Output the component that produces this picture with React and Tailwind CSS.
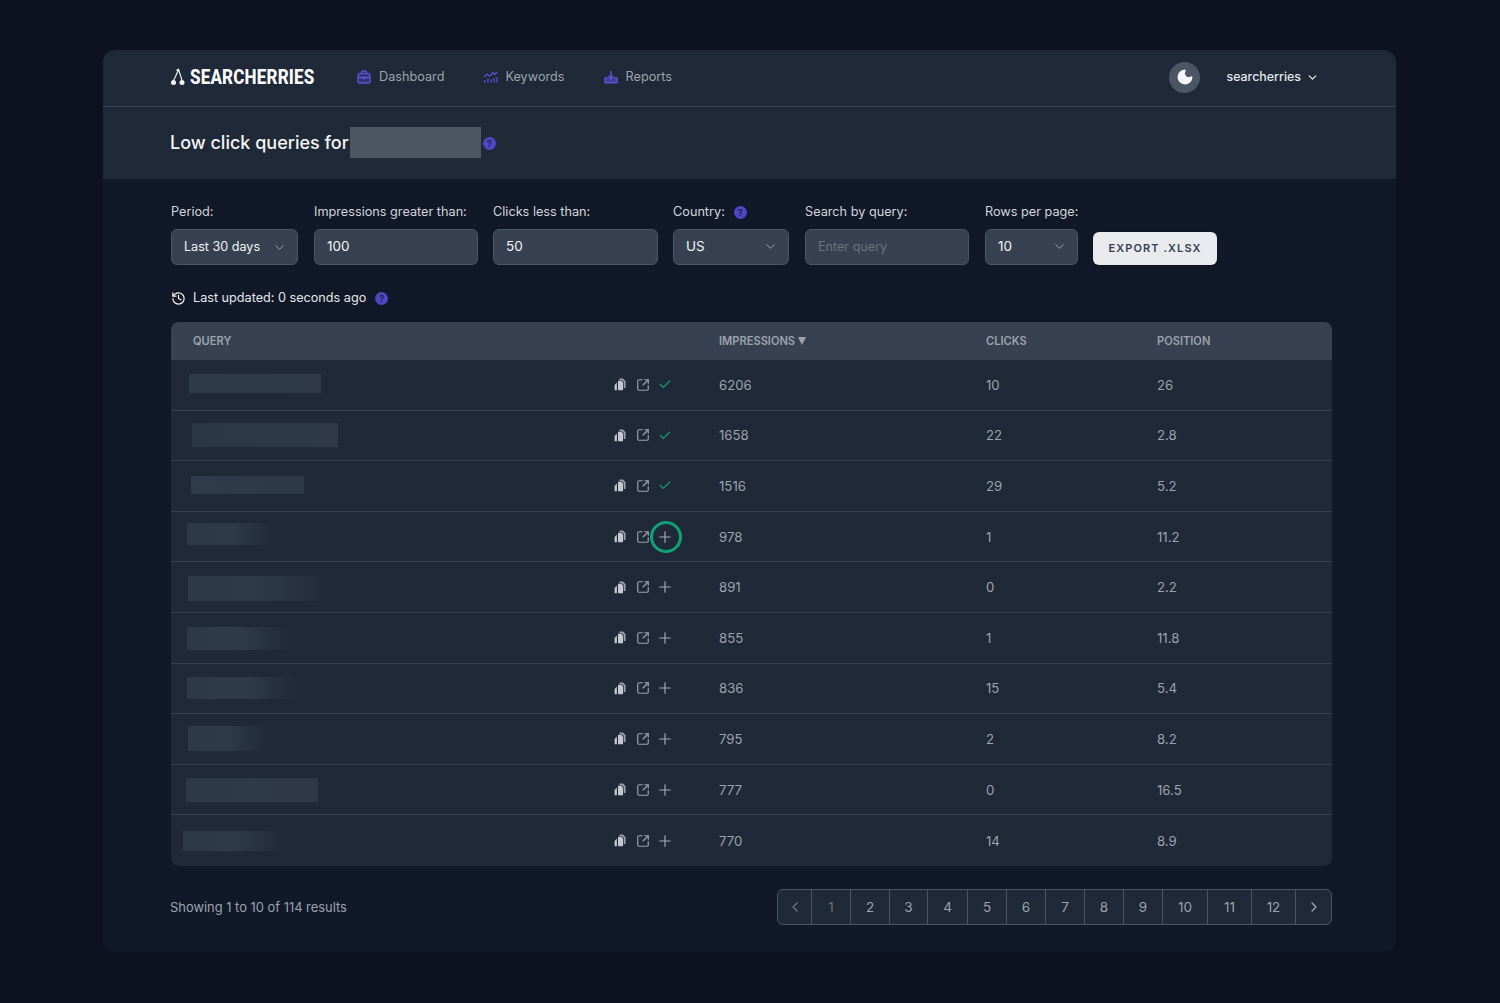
import React from "react";
import { ChevronDown, ChevronLeft, ChevronRight, Check, Plus, SquareArrowOutUpRight, History, Moon } from "lucide-react";

const rows = [
  { imp: "6206", clicks: "10", pos: "26", done: true, ml: 18, w: 132, h: 19, mt: -2, fade: "bg-gradient-to-r from-[#2d3a49] via-[#2e3b4a] to-[#2f3947]" },
  { imp: "1658", clicks: "22", pos: "2.8", done: true, ml: 21, w: 146, h: 24, mt: 0, fade: "bg-gradient-to-r from-[#2a3645] via-[#2d3947] to-[#2f3947]" },
  { imp: "1516", clicks: "29", pos: "5.2", done: true, ml: 20, w: 113, h: 18, mt: -1, fade: "bg-gradient-to-r from-[#2f3c4b] via-[#2e3a49] to-[#2e3946]" },
  { imp: "978", clicks: "1", pos: "11.2", ml: 16, w: 90, h: 22, mt: -6, ring: true, fade: "bg-gradient-to-r from-[#2d3947] via-[#2f3a48] to-[#1f2937]" },
  { imp: "891", clicks: "0", pos: "2.2", ml: 17, w: 132, h: 25, mt: 2, fade: "bg-gradient-to-r from-[#2d3947] via-[#2f3a48] to-[#232d3b]" },
  { imp: "855", clicks: "1", pos: "11.8", ml: 16, w: 106, h: 23, mt: 1, fade: "bg-gradient-to-r from-[#2d3947] via-[#303b49] to-[#1f2937]" },
  { imp: "836", clicks: "15", pos: "5.4", ml: 16, w: 114, h: 22, mt: 0, fade: "bg-gradient-to-r from-[#2d3947] via-[#303b49] to-[#1f2937]" },
  { imp: "795", clicks: "2", pos: "8.2", ml: 17, w: 82, h: 25, mt: 0, fade: "bg-gradient-to-r from-[#2d3947] via-[#2f3a48] to-[#1f2937]" },
  { imp: "777", clicks: "0", pos: "16.5", ml: 15, w: 132, h: 24, mt: 1, fade: "bg-gradient-to-r from-[#2d3947] via-[#2f3a48] to-[#2e3846]" },
  { imp: "770", clicks: "14", pos: "8.9", ml: 12, w: 104, h: 20, mt: 0, fade: "bg-gradient-to-r from-[#2d3947] via-[#2f3a48] to-[#1f2937]" },
];

const pages = [
  { t: "1", w: "w-[39px]", dim: true }, { t: "2", w: "w-[39px]" }, { t: "3", w: "w-[38px]" }, { t: "4", w: "w-[40px]" },
  { t: "5", w: "w-[39px]" }, { t: "6", w: "w-[39px]" }, { t: "7", w: "w-[39px]" }, { t: "8", w: "w-[39px]" },
  { t: "9", w: "w-[39px]" }, { t: "10", w: "w-[45px]" }, { t: "11", w: "w-[44px]" }, { t: "12", w: "w-[44px]" },
];

function Help({ className = "" }) {
  return (
    <span className={"inline-flex h-[13px] w-[13px] items-center justify-center rounded-full bg-[#4f46c8] text-[9px] font-bold leading-none text-[#1f2937] " + className}>?</span>
  );
}

function CopyIcon() {
  return (
    <svg width="12" height="13" viewBox="0 0 12 13" aria-hidden="true">
      <path d="M5.5 0.5h3.4L11.5 3v7h-1.8V3.8L7.9 2.2H5.5z" fill="#9ca3af" />
      <path d="M4 2.8h3.4L9 4.4v7.8H4z" fill="#c4c8cf" />
      <path d="M0.6 7L2.9 4.6v7.6H0.6z" fill="#c4c8cf" />
    </svg>
  );
}

function Logo() {
  return (
    <svg width="16" height="18" viewBox="0 0 16 18" fill="none" aria-hidden="true">
      <path d="M8.5 1C7.5 5 5.5 8.5 3.5 12.5M8.5 1C9.5 5 11 8.5 12 12.5M8.5 1L6.5 2.5" stroke="#f3f4f6" strokeWidth="1.1" />
      <circle cx="3.5" cy="14.5" r="2.5" fill="#f3f4f6" />
      <circle cx="12" cy="14.5" r="2.5" fill="#f3f4f6" />
    </svg>
  );
}

function DashIcon() {
  return (
    <svg width="14" height="14" viewBox="0 0 14 14" fill="none" stroke="#5b50d6" strokeWidth="1.5" aria-hidden="true">
      <path d="M4.5 3.5V2.2C4.5 1.5 5 1 5.7 1h2.6c.7 0 1.2.5 1.2 1.2v1.3" />
      <rect x="1" y="3.5" width="12" height="9.5" rx="2" fill="#5b50d6" fillOpacity="0.3" />
      <path d="M1 7.6h12M6 7.6v1h2v-1" />
    </svg>
  );
}

function KeyIcon() {
  return (
    <svg width="15" height="13" viewBox="0 0 15 13" fill="none" stroke="#5b50d6" strokeWidth="1.3" aria-hidden="true">
      <path d="M1 7l3.2-3 2.6 2.2L10 2.5l1.6 2L14 2" />
      <path d="M1.8 12.5V10M5 12.5V8.5M8 12.5V9.5M11 12.5V8M14 12.5V7" />
    </svg>
  );
}

function ReportIcon() {
  return (
    <svg width="14" height="14" viewBox="0 0 14 14" fill="none" stroke="#5b50d6" strokeWidth="1.6" aria-hidden="true">
      <path d="M7 1v7.5M4.2 6L7 8.8 9.8 6" />
      <path d="M3.8 8H1.2v4.8h11.6V8h-2.6" fill="#5b50d6" fillOpacity="0.6" />
    </svg>
  );
}

function NavItem({ icon, label, gap }) {
  return (
    <a className={"flex items-center text-[12.7px] text-[#9ca3af] " + gap}>
      {icon}
      <span>{label}</span>
    </a>
  );
}

function Field({ label, help, children, className }) {
  return (
    <div className={"flex flex-col " + className}>
      <label className="mb-[8px] flex h-[18px] items-center gap-[9px] whitespace-nowrap text-[12.7px] leading-[18px] text-[#d1d5db]">
        {label}
        {help && <Help />}
      </label>
      {children}
    </div>
  );
}

const boxCls = "flex h-[36px] w-full items-center justify-between rounded-md border border-[#4b5563] bg-[#374151] pl-[12px] pr-[10px]";

function Select({ value, size = "text-[13.5px] pb-px" }) {
  return (
    <div className={boxCls + " text-[#f3f4f6] " + size}>
      <span>{value}</span>
      <ChevronDown size={15} strokeWidth={1.6} className="text-[#9ca3af]" />
    </div>
  );
}

const cols = "grid grid-cols-[526px_267px_171px_1fr]";

export default function App() {
  return (
    <div className="min-h-[1003px] bg-[#0c1220] px-[103px] pt-[50px] [font-family:Inter,'Liberation_Sans',sans-serif]">
      <div className="h-[902px] w-[1293px] overflow-hidden rounded-xl bg-[#111827]">
        <header className="bg-[#1f2937]">
          <nav className="flex h-[57px] items-center border-b border-[#374151] pb-[2px] pl-[67px] pr-[77px]">
            <div className="flex w-[187px] items-center gap-[4px]">
              <Logo />
              <span className="inline-block origin-left scale-x-[0.81] whitespace-nowrap text-[21px] font-extrabold leading-none tracking-[0.01em] text-[#f9fafb] [font-family:Roboto,sans-serif]">SEARCHERRIES</span>
            </div>
            <div className="flex items-center gap-[39px]">
              <NavItem icon={<DashIcon />} label="Dashboard" gap="gap-[8px]" />
              <NavItem icon={<KeyIcon />} label="Keywords" gap="gap-[7px]" />
              <NavItem icon={<ReportIcon />} label="Reports" gap="gap-[8px]" />
            </div>
            <div className="ml-auto flex items-center">
              <span className="flex h-[31px] w-[31px] items-center justify-center rounded-full bg-[#4b5563]">
                <Moon size={18} fill="#f3f4f6" stroke="#f3f4f6" />
              </span>
              <span className="ml-[26px] text-[12.4px] font-medium text-[#e5e7eb]">searcherries</span>
              <ChevronDown size={13} strokeWidth={2.4} className="ml-[5px] text-[#e5e7eb]" />
            </div>
          </nav>
          <div className="flex h-[72px] items-center pb-[2px] pl-[67px]">
            <h1 className="text-[18px] font-medium text-[#f3f4f6]">Low click queries for</h1>
            <span className="ml-[1px] h-[31px] w-[131px] bg-[#4e5663]" />
            <Help className="ml-[2px] mt-[3px]" />
          </div>
        </header>

        <main className="pl-[68px] pr-[64px] pt-[24px]">
          <div className="flex items-end">
            <Field label="Period:" className="w-[127px]"><Select value="Last 30 days" size="text-[12.6px]" /></Field>
            <Field label="Impressions greater than:" className="ml-[16px] w-[164px]"><div className={boxCls + " pb-px text-[13.5px] text-[#f3f4f6]"}>100</div></Field>
            <Field label="Clicks less than:" className="ml-[15px] w-[165px]"><div className={boxCls + " pb-px text-[13.5px] text-[#f3f4f6]"}>50</div></Field>
            <Field label="Country:" help className="ml-[15px] w-[116px]"><Select value="US" /></Field>
            <Field label="Search by query:" className="ml-[16px] w-[164px]"><div className={boxCls + " text-[12.6px] text-[#6b7280]"}>Enter query</div></Field>
            <Field label="Rows per page:" className="ml-[16px] w-[93px]"><Select value="10" /></Field>
            <button className="ml-[15px] h-[33px] w-[124px] rounded-md bg-[#e8eaed] text-[11px] font-semibold tracking-[0.1em] text-[#374151] shadow">EXPORT .XLSX</button>
          </div>

          <div className="mt-[23px] flex h-[20px] items-center text-[12.65px] text-[#e5e7eb]">
            <History size={15} strokeWidth={2} className="mr-[7px] text-[#f3f4f6]" />
            <span>Last updated: 0 seconds ago</span>
            <Help className="ml-[9px]" />
          </div>

          <div className="mt-[14px] overflow-hidden rounded-lg bg-[#1f2937]">
            <div className={cols + " h-[38px] items-center bg-[#374151] text-[11.1px] font-semibold text-[#9ca3af]"}>
              <div className="pl-[22px]">QUERY</div>
              <div className="flex items-center gap-[3px] pl-[22px]">IMPRESSIONS<span className="h-0 w-0 border-x-[4.5px] border-t-[8px] border-x-transparent border-t-[#9ca3af]" /></div>
              <div className="pl-[22px]">CLICKS</div>
              <div className="pl-[22px]">POSITION</div>
            </div>
            {rows.map((r, i) => (
              <div key={r.imp} className={cols + " h-[50.6px] items-center text-[13.2px] text-[#9ca3af] " + (i < rows.length - 1 ? "border-b border-[#374151]" : "")}>
                <div className="flex items-center">
                  <span className={"shrink-0 " + r.fade} style={{ marginLeft: r.ml, width: r.w, height: r.h, marginTop: r.mt }} />
                  <div className="ml-auto flex items-center pr-[25px]">
                    <CopyIcon />
                    <SquareArrowOutUpRight size={14} strokeWidth={2} className="ml-[10px] text-[#9ca3af]" />
                    <span className="relative ml-[8px] flex h-[14px] w-[14px] items-center justify-center">
                      {r.done ? (
                        <Check size={15} strokeWidth={2} className="text-[#10a277]" />
                      ) : (
                        <Plus size={18} strokeWidth={1.6} className="shrink-0 text-[#a3a9b3]" />
                      )}
                      {r.ring && <span className="absolute left-[calc(50%+1px)] top-1/2 h-[32px] w-[32px] -translate-x-1/2 -translate-y-1/2 rounded-full border-[3px] border-[#10a277]" />}
                    </span>
                  </div>
                </div>
                <div className="pl-[22px] pt-[2px]">{r.imp}</div>
                <div className="pl-[22px] pt-[2px]">{r.clicks}</div>
                <div className="pl-[22px] pt-[2px]">{r.pos}</div>
              </div>
            ))}
          </div>

          <div className="mt-[23px] flex items-center justify-between">
            <p className="-ml-px mt-[2px] text-[12.9px] text-[#9ca3af]">Showing 1 to 10 of 114 results</p>
            <div className="flex h-[36px] items-stretch overflow-hidden rounded-md border border-[#4b5563] bg-[#1f2937] text-[13.5px] text-[#9ca3af]">
              <span className="flex w-[33px] items-center justify-center"><ChevronLeft size={16} strokeWidth={2} className="text-[#6b7280]" /></span>
              {pages.map((p) => (
                <span key={p.t} className={"flex items-center justify-center border-l border-[#4b5563] " + p.w + (p.dim ? " text-[#6b7280]" : "")}>{p.t}</span>
              ))}
              <span className="flex w-[36px] items-center justify-center border-l border-[#4b5563]"><ChevronRight size={16} strokeWidth={2} className="text-[#9ca3af]" /></span>
            </div>
          </div>
        </main>
      </div>
    </div>
  );
}
